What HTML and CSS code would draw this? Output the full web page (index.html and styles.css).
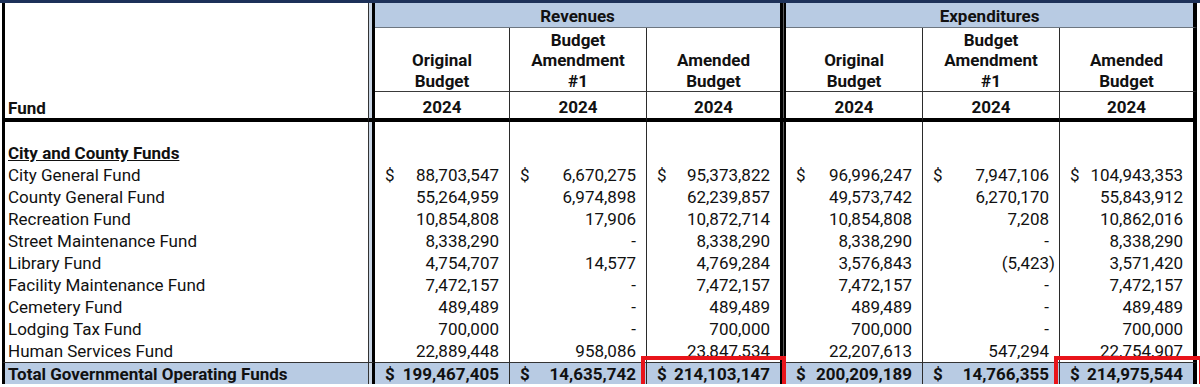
FILE: index.html
```html
<!DOCTYPE html>
<html lang="en">
<head>
  <meta charset="UTF-8">
  <title>Budget Amendment Summary</title>
  <link rel="stylesheet" href="styles.css">
</head>
<body>

<div class="sheet">
  <table class="budget">
    <colgroup>
      <col class="c-fund">
      <col class="c-sep1">
      <col class="c-r1">
      <col class="c-r2">
      <col class="c-r3">
      <col class="c-sep2">
      <col class="c-e1">
      <col class="c-e2">
      <col class="c-e3">
    </colgroup>
    <thead>
      <tr class="band">
        <th class="fund-head" rowspan="3">Fund</th>
        <th class="sep1" rowspan="3"></th>
        <th class="group" colspan="3">Revenues</th>
        <th class="sep2" rowspan="3"></th>
        <th class="group last" colspan="3">Expenditures</th>
      </tr>
      <tr class="sub">
        <th class="line">Original<br>Budget</th>
        <th class="line">Budget<br>Amendment<br>#1</th>
        <th>Amended<br>Budget</th>
        <th class="line">Original<br>Budget</th>
        <th class="line">Budget<br>Amendment<br>#1</th>
        <th class="last">Amended<br>Budget</th>
      </tr>
      <tr class="year">
        <th class="line">2024</th>
        <th class="line">2024</th>
        <th>2024</th>
        <th class="line">2024</th>
        <th class="line">2024</th>
        <th class="last">2024</th>
      </tr>
    </thead>
    <tbody>
      <tr class="blank">
        <td class="fund"></td><td class="sep1"></td>
        <td class="line"></td><td class="line"></td><td></td>
        <td class="sep2"></td>
        <td class="line"></td><td class="line"></td><td class="last"></td>
      </tr>
      <tr>
        <td class="fund section">City and County Funds</td><td class="sep1"></td>
        <td class="line"></td><td class="line"></td><td></td>
        <td class="sep2"></td>
        <td class="line"></td><td class="line"></td><td class="last"></td>
      </tr>
      <tr>
        <td class="fund">City General Fund</td><td class="sep1"></td>
        <td class="line num"><span class="cur">$</span>88,703,547</td>
        <td class="line num"><span class="cur">$</span>6,670,275</td>
        <td class="num"><span class="cur">$</span>95,373,822</td>
        <td class="sep2"></td>
        <td class="line num"><span class="cur">$</span>96,996,247</td>
        <td class="line num"><span class="cur">$</span>7,947,106</td>
        <td class="last num"><span class="cur">$</span>104,943,353</td>
      </tr>
      <tr>
        <td class="fund">County General Fund</td><td class="sep1"></td>
        <td class="line num">55,264,959</td>
        <td class="line num">6,974,898</td>
        <td class="num">62,239,857</td>
        <td class="sep2"></td>
        <td class="line num">49,573,742</td>
        <td class="line num">6,270,170</td>
        <td class="last num">55,843,912</td>
      </tr>
      <tr>
        <td class="fund">Recreation Fund</td><td class="sep1"></td>
        <td class="line num">10,854,808</td>
        <td class="line num">17,906</td>
        <td class="num">10,872,714</td>
        <td class="sep2"></td>
        <td class="line num">10,854,808</td>
        <td class="line num">7,208</td>
        <td class="last num">10,862,016</td>
      </tr>
      <tr>
        <td class="fund">Street Maintenance Fund</td><td class="sep1"></td>
        <td class="line num">8,338,290</td>
        <td class="line num">-</td>
        <td class="num">8,338,290</td>
        <td class="sep2"></td>
        <td class="line num">8,338,290</td>
        <td class="line num">-</td>
        <td class="last num">8,338,290</td>
      </tr>
      <tr>
        <td class="fund">Library Fund</td><td class="sep1"></td>
        <td class="line num">4,754,707</td>
        <td class="line num">14,577</td>
        <td class="num">4,769,284</td>
        <td class="sep2"></td>
        <td class="line num">3,576,843</td>
        <td class="line num"><span class="neg">(5,423)</span></td>
        <td class="last num">3,571,420</td>
      </tr>
      <tr>
        <td class="fund">Facility Maintenance Fund</td><td class="sep1"></td>
        <td class="line num">7,472,157</td>
        <td class="line num">-</td>
        <td class="num">7,472,157</td>
        <td class="sep2"></td>
        <td class="line num">7,472,157</td>
        <td class="line num">-</td>
        <td class="last num">7,472,157</td>
      </tr>
      <tr>
        <td class="fund">Cemetery Fund</td><td class="sep1"></td>
        <td class="line num">489,489</td>
        <td class="line num">-</td>
        <td class="num">489,489</td>
        <td class="sep2"></td>
        <td class="line num">489,489</td>
        <td class="line num">-</td>
        <td class="last num">489,489</td>
      </tr>
      <tr>
        <td class="fund">Lodging Tax Fund</td><td class="sep1"></td>
        <td class="line num">700,000</td>
        <td class="line num">-</td>
        <td class="num">700,000</td>
        <td class="sep2"></td>
        <td class="line num">700,000</td>
        <td class="line num">-</td>
        <td class="last num">700,000</td>
      </tr>
      <tr>
        <td class="fund">Human Services Fund</td><td class="sep1"></td>
        <td class="line num">22,889,448</td>
        <td class="line num">958,086</td>
        <td class="num">23,847,534</td>
        <td class="sep2"></td>
        <td class="line num">22,207,613</td>
        <td class="line num">547,294</td>
        <td class="last num">22,754,907</td>
      </tr>
      <tr class="total">
        <td class="fund">Total Governmental Operating Funds</td><td class="sep1"></td>
        <td class="line num"><span class="cur">$</span>199,467,405</td>
        <td class="line num"><span class="cur">$</span>14,635,742</td>
        <td class="num hl"><span class="cur">$</span>214,103,147</td>
        <td class="sep2"></td>
        <td class="line num"><span class="cur">$</span>200,209,189</td>
        <td class="line num"><span class="cur">$</span>14,766,355</td>
        <td class="last num hl"><span class="cur">$</span>214,975,544</td>
      </tr>
    </tbody>
  </table>
</div>

</body>
</html>
```

FILE: styles.css
```css
* {
  box-sizing: border-box;
}

body {
  margin: 0;
  background: #fff;
  font-family: Roboto, "Liberation Sans", sans-serif;
  font-size: 17px;
  color: #111;
}

.sheet {
  border-top: 3px solid #1d3159;
  padding-left: 2px;
}

.budget {
  border-collapse: separate;
  border-spacing: 0;
  table-layout: fixed;
  width: 1195px;
}

.c-fund { width: 366px; }
.c-sep1 { width: 7px; }
.c-r1 { width: 135px; }
.c-r2 { width: 137px; }
.c-r3 { width: 133px; }
.c-sep2 { width: 6px; }
.c-e1 { width: 137px; }
.c-e2 { width: 137px; }
.c-e3 { width: 137px; }

th, td {
  padding: 0;
  white-space: nowrap;
}

th {
  font-weight: bold;
  text-align: center;
}

/* header rows */
.band th.group {
  height: 25px;
  background: #b8cbe3;
  border-bottom: 1px solid #6d7680;
  line-height: 21px;
  padding-top: 3px;
}

.sub th {
  height: 64px;
  vertical-align: bottom;
  line-height: 20.5px;
  padding-bottom: 0;
  border-bottom: 1px solid #3a3a3a;
}

.year th {
  height: 30px;
  border-bottom: 4px solid #000;
  line-height: 22px;
  padding-top: 3px;
}

.fund-head {
  text-align: left;
  vertical-align: bottom;
  padding-left: 3px;
  line-height: 20px;
  border-left: 3px solid #000;
  border-bottom: 4px solid #000;
}

/* separators between blocks */
.sep1 {
  border-left: 1px solid #333;
  border-right: 3px solid #000;
  background: #c9d5e4;
}

.sep2 {
  border-left: 3px solid #000;
  border-right: 2px solid #000;
  background: #5a5a5a;
}

th.sep1, th.sep2 {
  border-bottom: 4px solid #000;
}

.line {
  border-right: 1px solid #2b2b2b;
}

.last {
  border-right: 4px solid #000;
}

/* body rows */
tbody tr {
  height: 22px;
}

tbody tr.blank {
  height: 20px;
}

td {
  line-height: 20px;
}

td.fund {
  border-left: 3px solid #000;
  padding-left: 3px;
}

td.section {
  font-weight: bold;
  text-decoration: underline;
}

td.num {
  text-align: right;
  padding-left: 10px;
  padding-right: 10px;
}

.cur {
  float: left;
}

.neg {
  margin-right: -6px;
}

.total td {
  height: 21px;
  background: #b8cbe3;
  font-weight: bold;
  border-top: 1px solid #333;
}

.total td.sep1 {
  background: #c9d5e4;
}

.total td.sep2 {
  background: #5a5a5a;
}

.hl {
  outline: 4px solid #e8141a;
  outline-offset: 2px;
}
```
